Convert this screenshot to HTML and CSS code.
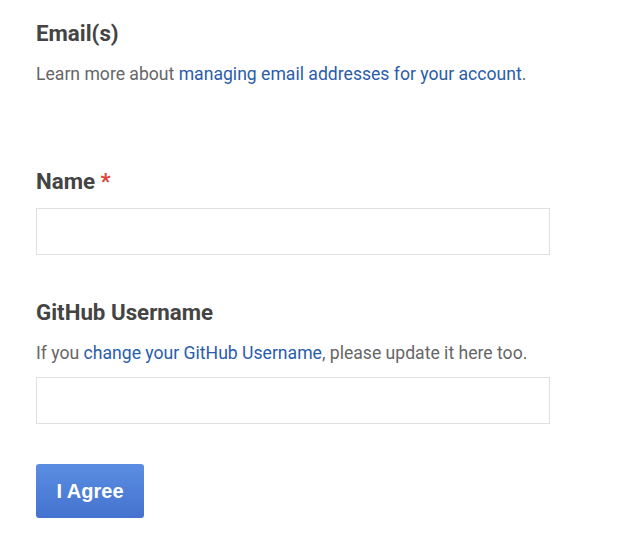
FILE: index.html
```html
<!DOCTYPE html>
<html>
<head>
<meta charset="utf-8">
<link rel="stylesheet" href="styles.css">
</head>
<body>
<form class="form">
  <section class="field field-email">
    <h2 class="label">Email(s)</h2>
    <p class="help">Learn more about <a href="#">managing email addresses for your account</a>.</p>
  </section>
  <section class="field field-name">
    <h2 class="label">Name <span class="req">*</span></h2>
    <input class="input" type="text">
  </section>
  <section class="field field-github">
    <h2 class="label">GitHub Username</h2>
    <p class="help">If you <a href="#">change your GitHub Username</a>, please update it here too.</p>
    <input class="input input-after-help" type="text">
  </section>
  <div class="actions">
    <button class="btn" type="button">I Agree</button>
  </div>
</form>
</body>
</html>
```
FILE: styles.css
```css
html, body {
  margin: 0;
  padding: 0;
  background: #fff;
}
body {
  font-family: Roboto, "Liberation Sans", sans-serif;
  color: #666;
}
.form {
  display: flex;
  flex-direction: column;
  padding: 19px 0 0 36px;
  width: 514px;
}
.field {
  display: flex;
  flex-direction: column;
}
.label {
  margin: 0;
  font-size: 22.3px;
  line-height: 28px;
  font-weight: 700;
  color: #444;
}
.req {
  color: #d9453a;
}
.help {
  margin: 14px 0 0;
  font-size: 17.6px;
  line-height: 26px;
  color: #666;
}
.help a {
  color: #2a5cab;
  text-decoration: none;
}
.field-name {
  margin-top: 80px;
}
.field-github {
  margin-top: 43px;
}
.input {
  box-sizing: border-box;
  width: 514px;
  height: 47px;
  margin: 13px 0 0;
  border: 1px solid #e0e0e0;
  border-radius: 0;
  background: #fff;
  padding: 0 10px;
  outline: none;
}
.input-after-help {
  margin-top: 11px;
}
.actions {
  margin-top: 40px;
  display: flex;
}
.btn {
  box-sizing: border-box;
  width: 108px;
  height: 54px;
  border: 0;
  border-radius: 3px;
  background: linear-gradient(#5b8ee2, #4473cf);
  color: #fff;
  font-family: "Liberation Sans", Arial, sans-serif;
  font-weight: 700;
  font-size: 20px;
  padding: 0;
  cursor: pointer;
}
```
